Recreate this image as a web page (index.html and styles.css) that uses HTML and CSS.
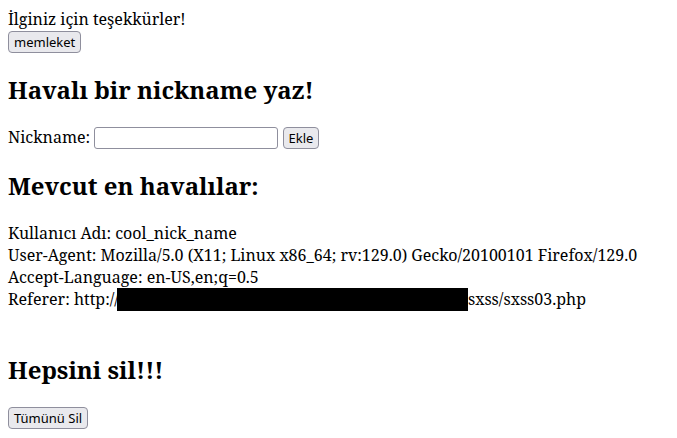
FILE: index.html
```html
<!DOCTYPE html>
<html lang="tr">
<head>
<meta charset="utf-8">
<link rel="stylesheet" href="styles.css">
</head>
<body>
İlginiz için teşekkürler!<br>
<button class="btn">memleket</button>
<h2>Havalı bir nickname yaz!</h2>
<form class="nick-form">
  <label>Nickname:</label> <input type="text" class="field"> <button class="btn" type="button">Ekle</button>
</form>
<h2>Mevcut en havalılar:</h2>
<p class="entries">
Kullanıcı Adı: cool_nick_name<br>
User-Agent: Mozilla/5.0 (X11; Linux x86_64; rv:129.0) Gecko/20100101 Firefox/129.0<br>
Accept-Language: en-US,en;q=0.5<br>
Referer: http://<span class="redact"></span>sxss/sxss03.php<br><br>
</p>
<h2>Hepsini sil!!!</h2>
<button class="btn">Tümünü Sil</button>
</body>
</html>
```
FILE: styles.css
```css
html, body {
  font-family: "Noto Serif", "DejaVu Serif", serif;
  font-size: 16px;
  color: #000;
  background: #fff;
}
body {
  margin: 8px;
}
h2 {
  font-size: 1.5em;
  font-weight: bold;
  margin: 0.83em 0;
}
.btn {
  font-family: "Noto Sans", "DejaVu Sans", sans-serif;
  font-size: 13px;
  background: #e9e9ed;
  border: 1px solid #8f8f9d;
  border-radius: 4px;
  padding: 1px 5px;
  color: #000;
}
.field {
  width: 178px;
  height: 18px;
  border: 1px solid #8f8f9d;
  border-radius: 3px;
  padding: 1px 2px;
  vertical-align: baseline;
}
.nick-form {
  margin: 0;
}
.entries {
  margin: 16px 0;
}
.redact {
  display: inline-block;
  width: 351px;
  height: 23px;
  background: #000;
  vertical-align: -6px;
  margin-left: -2px;
}
```
